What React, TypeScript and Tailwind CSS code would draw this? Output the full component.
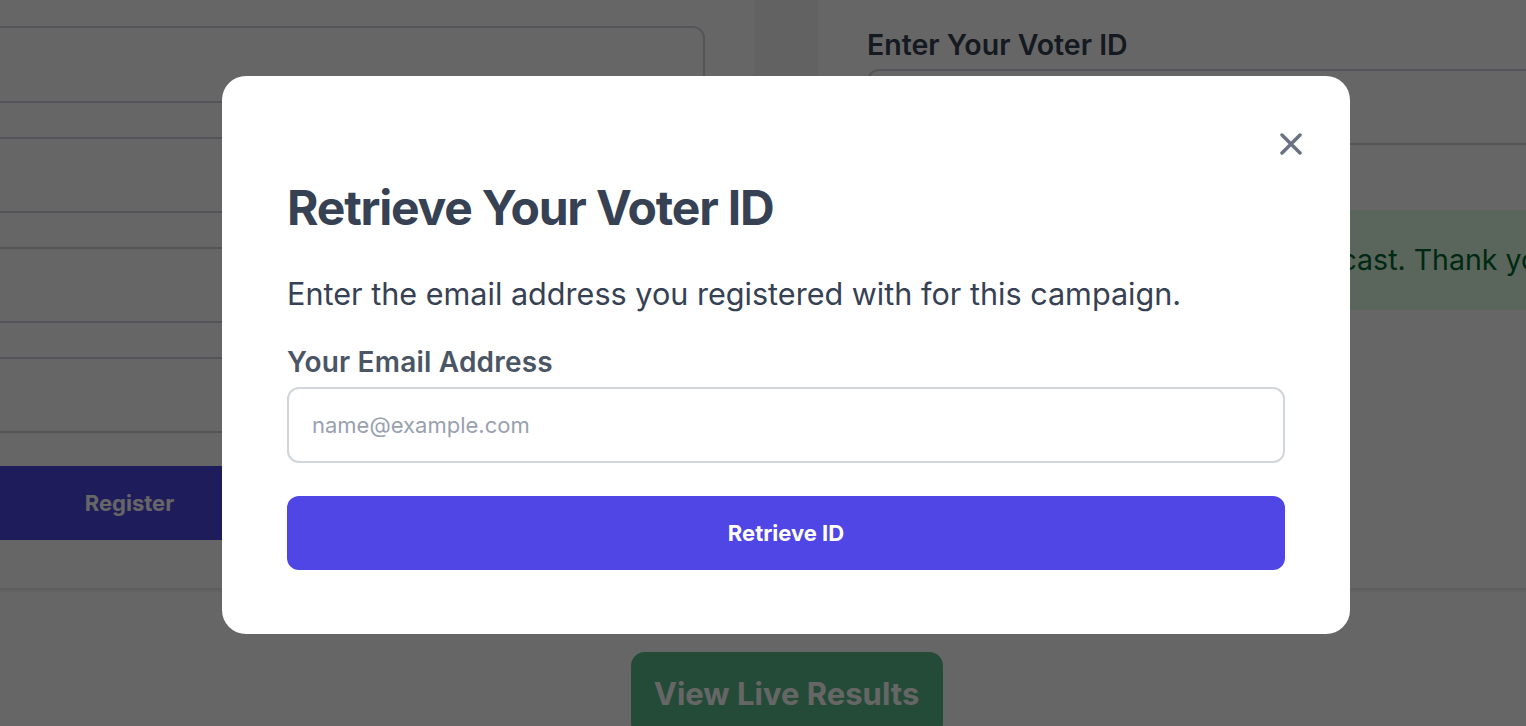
const fields = ["Full Name", "Email", "Phone", "Address"];

const App = () => {
  return (
    <div className="relative h-[726px] w-[1526px] overflow-hidden bg-white font-['Inter','Noto_Sans',sans-serif]">
      {/* page behind the dialog */}
      <div className="ml-[-496px] flex w-[2565px] flex-col items-center">
        <div className="flex w-full shadow-[0_2px_4px_rgba(0,0,0,0.12)]">
          {/* registration card */}
          <div className="flex w-[1251px] flex-col bg-white px-[50px] pt-[26px] pb-[48px]">
            {fields.map((f, i) => (
              <input
                key={f}
                aria-label={f}
                className={
                  i === 0
                    ? "h-[77px] w-full rounded-[12px] border-2 border-gray-300"
                    : "mt-[34px] h-[76px] w-full rounded-[12px] border-2 border-gray-300"
                }
              />
            ))}
            <button className="mt-[33px] flex h-[74px] w-full items-center justify-center bg-[#4f46e5] text-[22px] font-bold text-white">
              Register
            </button>
          </div>

          <div className="w-[63px] bg-[#f4f4f5]" />

          {/* voting card */}
          <div className="flex w-[1251px] flex-col bg-white px-[49px] pt-[29px]">
            <label className="text-[28.5px] leading-[32px] font-semibold text-gray-700">
              Enter Your Voter ID
            </label>
            <input className="mt-[8px] h-[76px] w-full rounded-[12px] border-2 border-gray-300" />
            <div className="mt-[65px] flex h-[100px] items-center rounded-[6px] bg-[#e0ffe4] px-[24px] text-[28.5px] text-green-800">
              <span className="pl-[182px]">Your vote has been cast. Thank you!</span>
            </div>
          </div>
        </div>

        <button className="mt-[64px] flex h-[85px] w-[312px] items-center justify-center rounded-[14px] bg-[#58bb8a] text-[31px] font-bold text-white">
          View Live Results
        </button>
      </div>

      {/* overlay + dialog */}
      <div className="absolute inset-0 bg-[rgba(0,0,0,0.6)]">
        <div className="relative mt-[76px] ml-[222px] flex w-[1128px] flex-col rounded-[24px] bg-white px-[65px] pt-[108px] pb-[64px]">
          <button className="absolute top-[57px] right-[48px] text-gray-500" aria-label="Close">
            <svg width="22" height="22" viewBox="0 0 22 22" fill="none" stroke="currentColor" strokeWidth="3.5" strokeLinecap="round">
              <path d="M2 2 20 20M20 2 2 20" />
            </svg>
          </button>

          <h2 className="text-[48px] leading-[48px] font-bold tracking-tight text-gray-700">
            Retrieve Your Voter ID
          </h2>
          <p className="mt-[39px] text-[30.6px] leading-[45px] text-gray-700">
            Enter the email address you registered with for this campaign.
          </p>
          <label className="mt-[26px] text-[28px] leading-[40px] font-semibold tracking-[0.2px] text-gray-600">
            Your Email Address
          </label>
          <input
            placeholder="name@example.com"
            className="mt-[5px] h-[76px] w-full rounded-[12px] border-2 border-gray-300 pl-[23px] text-[22px] outline-none placeholder:text-gray-400"
          />
          <button className="mt-[33px] flex h-[74px] w-full items-center justify-center rounded-[12px] bg-[#4f46e5] text-[22px] font-bold text-white">
            Retrieve ID
          </button>
        </div>
      </div>
    </div>
  );
};

export default App;
